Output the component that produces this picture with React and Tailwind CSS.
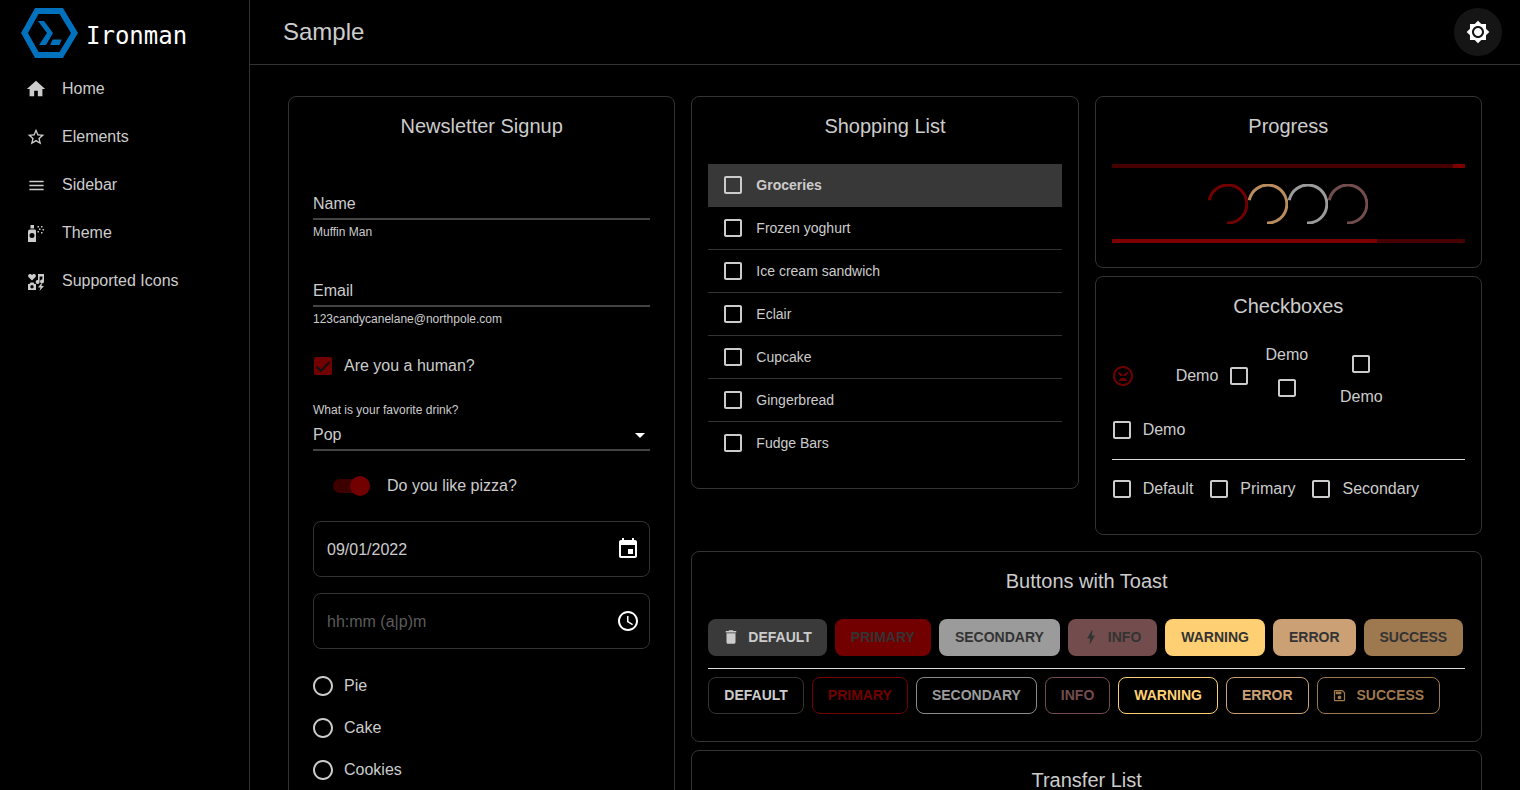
import React from 'react';

const paths = {
  home: 'M10 20v-6h4v6h5v-8h3L12 3 2 12h3v8z',
  star: 'M22 9.24l-7.19-.62L12 2 9.19 8.63 2 9.24l5.46 4.73L5.82 21 12 17.27 18.18 21l-1.63-7.03L22 9.24zM12 15.4l-3.76 2.27 1-4.28-3.32-2.88 4.38-.38L12 6.1l1.71 4.04 4.38.38-3.32 2.88 1 4.28L12 15.4z',
  menu: 'M3 18h18v-2H3v2zm0-5h18v-2H3v2zm0-7v2h18V6H3z',
  spray: 'M6.500 4h3.500v3.500H6.500zM6 8.500h4.500c1 0 1.500.7 1.500 1.500v11H4V10.500c0-1.200 1-2 2-2zM8 12a2.500 2.500 0 1 0 0 5 2.500 2.500 0 0 0 0-5zM13.500 5h1.500v1.500h-1.500zM17 5h1.500v1.500H17zM15 7.500h1.500V9H15zM18.500 8H20v1.500h-1.500zM13.500 10h1.500v1.500h-1.500zM17 11h1.500v1.500H17z',
  symbols: 'M8 11.500L4.700 8.300C3.500 7 4.200 5 6 5c.9 0 1.500.5 2 1.100C8.500 5.500 9.100 5 10 5c1.800 0 2.500 2 1.300 3.300zM14 5h6v7.500a2 2 0 1 1-1.600-2V7.500h-2.800v5.500a2 2 0 1 1-1.600-2zM6.500 13.500h3l1 1.500H12v6H4v-6h1.500zM8 16a1.700 1.700 0 1 0 0 3.400A1.700 1.700 0 0 0 8 16zM17.500 14L14 18.500h2.500L15.500 22l4.500-5h-2.700l1.200-3z',
  checkbox: 'M19 5v14H5V5h14m0-2H5c-1.100 0-2 .9-2 2v14c0 1.100.9 2 2 2h14c1.100 0 2-.9 2-2V5c0-1.100-.9-2-2-2z',
  radio: 'M12 2C6.480 2 2 6.480 2 12s4.480 10 10 10 10-4.480 10-10S17.520 2 12 2zm0 18c-4.420 0-8-3.580-8-8s3.580-8 8-8 8 3.580 8 8-3.580 8-8 8z',
  event: 'M17 12h-5v5h5v-5zM16 1v2H8V1H6v2H5c-1.110 0-1.990.9-1.990 2L3 19c0 1.100.89 2 2 2h14c1.100 0 2-.9 2-2V5c0-1.100-.9-2-2-2h-1V1h-2zm3 18H5V8h14v11z',
  clock: 'M11.990 2C6.470 2 2 6.480 2 12s4.470 10 9.990 10C17.520 22 22 17.520 22 12S17.520 2 11.990 2zM12 20c-4.420 0-8-3.580-8-8s3.580-8 8-8 8 3.580 8 8-3.580 8-8 8zM12.500 7H11v6l5.250 3.150.75-1.230-4.500-2.670z',
  brightness: 'M20 8.690V4h-4.690L12 .69 8.690 4H4v4.690L.69 12 4 15.310V20h4.690L12 23.310 15.310 20H20v-4.690L23.310 12 20 8.690zM12 18c-3.310 0-6-2.690-6-6s2.690-6 6-6 6 2.690 6 6-2.690 6-6 6zm0-10c-2.210 0-4 1.790-4 4s1.790 4 4 4 4-1.790 4-4-1.790-4-4-4z',
  mood: 'M11.990 2C6.470 2 2 6.480 2 12s4.470 10 9.990 10C17.520 22 22 17.520 22 12S17.520 2 11.990 2zM12 20c-4.420 0-8-3.580-8-8s3.580-8 8-8 8 3.580 8 8-3.580 8-8 8zM7 7.800l4.500 2.500V12H9.500L7 9.500zM17 7.800l-4.500 2.500V12h2L17 9.500zM12 14c-2 0-3.700 1.200-4.300 3h8.600c-.6-1.800-2.300-3-4.300-3z',
  trash: 'M6 19c0 1.100.9 2 2 2h8c1.100 0 2-.9 2-2V7H6v12zM19 4h-3.500l-1-1h-5l-1 1H5v2h14V4z',
  bolt: 'M11 21h-1l1-7H7.500c-.58 0-.57-.32-.38-.66.19-.34.05-.08.07-.12C8.480 10.940 10.420 7.540 13 3h1l-1 7h3.500c.49 0 .56.33.47.51l-.07.15C12.960 17.550 11 21 11 21z',
  save: 'M17 3H5c-1.110 0-2 .9-2 2v14c0 1.100.89 2 2 2h14c1.100 0 2-.9 2-2V7l-4-4zm2 16H5V5h11.170L19 7.830V19zm-7-7c-1.660 0-3 1.340-3 3s1.340 3 3 3 3-1.340 3-3-1.340-3-3-3zM6 6h9v4H6z',
};

function Icon({ name, size = 24, className = '' }) {
  return (
    <svg width={size} height={size} viewBox="0 0 24 24" fill="currentColor" fillRule="evenodd" className={`shrink-0 ${className}`}>
      <path d={paths[name]} />
    </svg>
  );
}

function Cb({ className = 'text-[#cccccc]' }) {
  return (
    <span className={`w-[42px] h-[42px] shrink-0 flex items-center justify-center ${className}`}>
      <Icon name="checkbox" />
    </span>
  );
}

function Card({ className = '', title, children }) {
  return (
    <section className={`border border-[#333333] rounded-lg ${className}`}>
      <h2 className="text-xl leading-7 mt-[15px] text-center text-[#cccccc] font-normal">{title}</h2>
      {children}
    </section>
  );
}

function Logo() {
  return (
    <svg width="60" height="52" viewBox="20 7 60 52" className="shrink-0">
      <polygon points="24.500,33 36.800,11 61.200,11 74.500,33 61.200,55 36.800,55" fill="none" stroke="#0072bd" strokeWidth="6" />
      <polygon points="38,21 44,21 53,33 46,45 39,45 47,33" fill="#0072bd" />
      <polygon points="52.700,39.500 61.700,39.500 59.300,45 50,45" fill="#0072bd" />
    </svg>
  );
}

const navItems = [
  ['home', 'Home', 22],
  ['star', 'Elements', 20],
  ['menu', 'Sidebar', 19],
  ['spray', 'Theme', 24],
  ['symbols', 'Supported Icons', 24],
];

function Sidebar() {
  return (
    <aside className="w-[250px] shrink-0 border-r border-[#333333]">
      <div className="h-[65px] flex items-center pl-5">
        <Logo />
        <span className="ml-[6px] mt-[6px] text-2xl text-white font-['DejaVu_Sans_Mono',monospace]">Ironman</span>
      </div>
      {navItems.map(([icon, label, size]) => (
        <div key={label} className="h-12 flex items-center pl-6 text-[#cccccc]">
          <span className="w-6 h-6 flex items-center justify-center">
            <Icon name={icon} size={size} />
          </span>
          <span className="ml-[14px] text-base">{label}</span>
        </div>
      ))}
    </aside>
  );
}

function Newsletter() {
  return (
    <Card title="Newsletter Signup" className="h-[800px] px-6 text-[#cccccc]">
      <div className="mt-[52px] border-b-2 border-[#444444] pb-[2px] text-base leading-6">Name</div>
      <div className="mt-[2px] text-xs leading-5">Muffin Man</div>
      <div className="mt-[37px] border-b-2 border-[#444444] pb-[2px] text-base leading-6">Email</div>
      <div className="mt-[2px] text-xs leading-5">123candycanelane@northpole.com</div>

      <div className="mt-4 h-[42px] flex items-center">
        <svg width="24" height="24" viewBox="0 0 24 24" className="-ml-[2px] shrink-0">
          <rect x="3" y="3" width="18" height="18" rx="2" fill="#730000" />
          <path d="M5.500 12.500l4.500 4.500 8.500-9" fill="none" stroke="#111111" strokeWidth="2" />
        </svg>
        <span className="ml-[9px] text-base">Are you a human?</span>
      </div>

      <div className="mt-[15px] text-xs leading-4">What is your favorite drink?</div>
      <div className="mt-[5px] pb-[2px] border-b-2 border-[#444444] flex items-center justify-between text-base leading-6">
        <span>Pop</span>
        <svg width="24" height="24" viewBox="0 0 24 24" fill="white" className="-mr-[2px] shrink-0"><path d="M7 10l5 5 5-5z" /></svg>
      </div>

      <div className="mt-4 h-[38px] flex items-center pl-5">
        <span className="relative w-[34px] h-[14px] rounded-full bg-[#3d0000] shrink-0">
          <span className="absolute left-[17px] -top-[3px] w-5 h-5 rounded-full bg-[#730000]" />
        </span>
        <span className="ml-5 text-base">Do you like pizza?</span>
      </div>

      <div className="mt-4 h-14 border border-[#333333] rounded-lg flex items-center justify-between pl-[13px] pr-[9px] text-base">
        <span className="mt-px">09/01/2022</span>
        <Icon name="event" className="text-white" />
      </div>
      <div className="mt-4 h-14 border border-[#333333] rounded-lg flex items-center justify-between pl-[13px] pr-[9px] text-base">
        <span className="mt-px text-[#5c5c5c]">hh:mm (a|p)m</span>
        <Icon name="clock" className="text-white" />
      </div>

      <div className="mt-4">
        {['Pie', 'Cake', 'Cookies'].map((label) => (
          <div key={label} className="h-[42px] flex items-center text-base">
            <Icon name="radio" className="-ml-[2px]" />
            <span className="ml-[9px]">{label}</span>
          </div>
        ))}
      </div>
    </Card>
  );
}

const shopping = ['Frozen yoghurt', 'Ice cream sandwich', 'Eclair', 'Cupcake', 'Gingerbread', 'Fudge Bars'];

function ShoppingList() {
  return (
    <Card title="Shopping List" className="h-[393px] px-4 text-[#cccccc]">
      <div className="mt-6 h-[43px] pb-px bg-[#383838] flex items-center pl-[4px]">
        <Cb />
        <span className="ml-[2px] text-sm font-bold">Groceries</span>
      </div>
      {shopping.map((item, i) => (
        <div key={item} className={`h-[43px] flex items-center pl-[4px] ${i < shopping.length - 1 ? 'border-b border-[#333333]' : 'pb-px'}`}>
          <Cb />
          <span className="ml-[2px] text-sm">{item}</span>
        </div>
      ))}
    </Card>
  );
}

const spinners = ['#730000', '#b88c5e', '#9b9b9b', '#734d4d'];

function Progress() {
  return (
    <Card title="Progress" className="h-[172px] px-4">
      <div className="mt-6 h-1 bg-[#470000] flex justify-end">
        <div className="w-3 bg-[#7d0000]" />
      </div>
      <div className="mt-4 flex justify-center">
        {spinners.map((c) => (
          <svg key={c} width="40" height="40" viewBox="0 0 40 40" fill="none">
            <path d="M1.200 16.300A19 19 0 1 1 19 39" stroke={c} strokeWidth="3" />
          </svg>
        ))}
      </div>
      <div className="mt-[15px] h-1 bg-[#470000]">
        <div className="h-full w-[75%] bg-[#7d0000]" />
      </div>
    </Card>
  );
}

function Checkboxes() {
  return (
    <Card title="Checkboxes" className="h-[259px] px-4 text-[#cccccc] text-base">
      <div className="mt-[22px] h-[67px] flex items-center">
        <Icon name="mood" className="text-[#730000] -ml-px" />
        <span className="ml-[41px]">Demo</span>
        <Cb />
        <div className="ml-[5px] w-11 flex flex-col items-center">
          <span className="leading-6 -ml-px">Demo</span>
          <Cb />
        </div>
        <div className="ml-[30px] w-11 flex flex-col items-center">
          <Cb />
          <span className="leading-6">Demo</span>
        </div>
      </div>
      <div className="h-[42px] flex items-center -ml-[11px]">
        <Cb />
        <span>Demo</span>
      </div>
      <div className="mt-2 border-t border-[#dddddd]" />
      <div className="mt-2 h-[42px] flex items-center -ml-[11px]">
        <Cb />
        <span>Default</span>
        <span className="ml-[5px]"><Cb /></span>
        <span>Primary</span>
        <span className="ml-[5px]"><Cb /></span>
        <span>Secondary</span>
      </div>
    </Card>
  );
}

const filled = [
  { label: 'Default', icon: 'trash', cls: 'pl-4 pr-[15px] bg-[#3a3a3a] text-[#cccccc]' },
  { label: 'Primary', cls: 'px-4 bg-[#730000] text-[#333333]' },
  { label: 'Secondary', cls: 'px-4 bg-[#9b9b9b] text-[#333333]' },
  { label: 'Info', icon: 'bolt', cls: 'px-4 bg-[#734d4d] text-[#333333]' },
  { label: 'Warning', cls: 'px-4 bg-[#ffd073] text-[#333333]' },
  { label: 'Error', cls: 'px-4 bg-[#cca075] text-[#333333]' },
  { label: 'Success', cls: 'px-4 bg-[#9e784f] text-[#333333]' },
];

const outlined = [
  { label: 'Default', cls: 'border-[#333333] text-[#cccccc]' },
  { label: 'Primary', cls: 'border-[#730000] text-[#730000]' },
  { label: 'Secondary', cls: 'border-[#8a8a8a] text-[#9b9b9b]' },
  { label: 'Info', cls: 'border-[#734d4d] text-[#734d4d]' },
  { label: 'Warning', cls: 'border-[#ffd073] text-[#ffd073]' },
  { label: 'Error', cls: 'border-[#cca075] text-[#cca075]' },
  { label: 'Success', icon: 'save', small: true, cls: 'border-[#9e784f] text-[#9e784f]' },
];

function Btn({ label, icon, small, cls }) {
  return (
    <button className={`h-[37px] pb-px rounded-lg flex items-center text-sm font-bold uppercase ${cls}`}>
      {icon && (
        <span className="w-[18px] h-[18px] -ml-[2px] mr-2 flex items-center justify-center">
          <Icon name={icon} size={small ? 15 : 18} />
        </span>
      )}
      {label}
    </button>
  );
}

function Buttons() {
  return (
    <Card title="Buttons with Toast" className="h-[191px] px-4">
      <div className="mt-6 flex gap-2">
        {filled.map((b) => <Btn key={b.label} {...b} />)}
      </div>
      <div className="mt-3 border-t border-[#dddddd]" />
      <div className="mt-2 flex gap-2">
        {outlined.map((b) => <Btn key={b.label} {...b} cls={`border px-[15px] ${b.cls}`} />)}
      </div>
    </Card>
  );
}

export default function App() {
  return (
    <div className="h-[790px] overflow-hidden bg-black flex font-['Liberation_Sans',Arial,sans-serif]">
      <Sidebar />
      <div className="flex-1 min-w-0">
        <header className="h-[65px] border-b border-[#333333] flex items-center justify-between pl-[33px] pr-[18px]">
          <h1 className="text-2xl font-normal text-[#cccccc]">Sample</h1>
          <button className="w-12 h-12 rounded-full bg-[#151515] flex items-center justify-center text-white">
            <Icon name="brightness" />
          </button>
        </header>
        <main className="pt-[31px] px-[38px] grid grid-cols-3 gap-4 items-start">
          <Newsletter />
          <div className="col-span-2 grid grid-cols-2 gap-x-4 items-start">
            <ShoppingList />
            <div className="flex flex-col gap-2">
              <Progress />
              <Checkboxes />
            </div>
            <div className="col-span-2 mt-4">
              <Buttons />
              <Card title="Transfer List" className="mt-2 h-[200px]" />
            </div>
          </div>
        </main>
      </div>
    </div>
  );
}
